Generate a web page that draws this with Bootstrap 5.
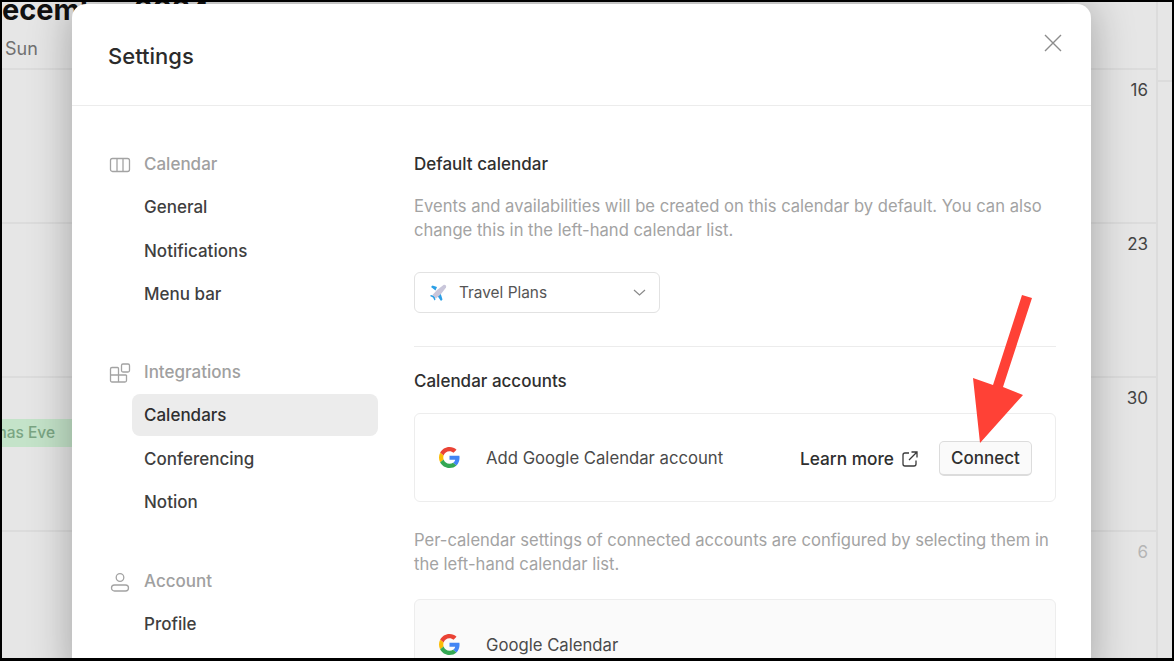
<!DOCTYPE html>
<html lang="en">
  <head>
    <title>Settings</title>
    <meta charset="utf-8" />
    <meta name="viewport" content="width=device-width, initial-scale=1" />
    <link
      href="https://cdn.jsdelivr.net/npm/bootstrap@5.3.3/dist/css/bootstrap.min.css"
      rel="stylesheet"
    />
    <style>
      html, body { height: 100%; }
      body { background: #000; font-family: "Inter", "Liberation Sans", sans-serif; overflow: hidden; padding: 2px 2px 3px 2px; color: #2b2b2b; }
      .shot { position: relative; height: 100%; overflow: hidden; background: #e6e6e6; }

      /* calendar behind the dialog */
      .cal-top { display: flow-root; height: 68px; border-bottom: 2px solid #dcdcdc; border-right: 2px solid #dcdcdc; margin-right: 14px; }
      .cal-title { font-size: 29px; font-weight: 700; line-height: 36px; color: #111; margin: -10px 0 0 -21px; white-space: nowrap; }
      .cal-dow { font-size: 18px; color: #707070; line-height: 24px; margin: 9px 0 0 3px; }
      .cal-row { height: 154px; border-bottom: 2px solid #dcdcdc; margin-right: 14px; border-right: 2px solid #dcdcdc; display: flow-root; }
      .cal-num { width: 24px; margin: 8px 8px 0 auto; font-size: 17px; line-height: 24px; text-align: right; color: #444; }
      .cal-num-off { color: #b5b5b5; }
      .cal-event { width: 70px; height: 28px; margin-top: 9px; padding-right: 17px; background: #c4e3c9; color: #7aa583; font-size: 15.5px; font-weight: 500; line-height: 28px; white-space: nowrap; display: flex; justify-content: flex-end; }
      .cal-strip { position: absolute; top: 78px; right: 0; width: 14px; border-top: 2px solid #dcdcdc; }

      /* settings dialog */
      .set-dialog { position: absolute; left: 70px; top: 2px; width: 1019px; height: 680px; background: #fff; border: 0; border-radius: 14px; box-shadow: 0 0 44px rgba(0, 0, 0, .3); overflow: hidden; }
      .set-head { flex: none; height: 102px; padding: 0 29px 0 36px; border-bottom: 1px solid #ececec; }
      .set-title { font-size: 22px; font-weight: 500; color: #2b2b2b; margin: 4px 0 0; }
      .set-close { background: none; border: 0; padding: 0; margin-bottom: 24px; width: 18px; height: 18px; line-height: 0; }
      .set-side { width: 342px; padding: 37px 0 0 36px; flex: none; }
      .set-group { display: flex; align-items: center; height: 43px; font-size: 17px; font-weight: 500; color: #a0a0a0; }
      .set-group svg { width: 22px; height: 22px; margin: 0 13px 0 1px; flex: none; }
      .set-item { display: block; width: 246px; height: 42px; margin: 0 0 1.5px 24px; padding: 0 12px; font-size: 17px; font-weight: 500; line-height: 42px; color: #3f3f3f; text-decoration: none; border-radius: 8px; }
      .set-item.is-on { background: #ececec; color: #2f2f2f; }
      .set-gap { height: 34.5px; }
      .set-gap-wide { height: 35.5px; }
      .set-main { width: 642px; flex: none; padding-top: 46px; }
      .set-h { font-size: 17px; font-weight: 500; line-height: 24px; color: #2f2f2f; margin: 0; }
      .set-note { font-size: 16.6px; line-height: 24px; color: #a3a3a3; margin: 18px 0 0; }
      .set-note-after { margin-top: 26px; }
      .set-select { width: 246px; height: 41px; margin-top: 30px; padding: 0 13px 0 15px; border: 1px solid #e2e2e2; border-radius: 6px; font-size: 15.4px; color: #555; background: #fff; }
      .set-plane { margin-right: 12px; flex: none; }
      .set-rule { height: 1px; margin: 33px 0 22px; background: #ececec; }
      .acct-box { height: 89px; margin-top: 20px; padding: 2px 23px 0 24px; border: 1px solid #ededed; border-radius: 6px; }
      .acct-box.is-soft { background: #fafafa; height: 120px; margin-top: 23px; padding-top: 34px; align-items: flex-start !important; }
      .acct-logo { margin-bottom: 2px; flex: none; }
      .acct-name { font-size: 16.7px; line-height: 21px; color: #4a4a4a; margin-left: 26px; }
      .is-soft .acct-name { margin-top: 1px; }
      .acct-link { font-size: 17.3px; font-weight: 500; color: #2f2f2f; }
      .acct-btn { height: 35px; width: 93px; margin-left: 21px; padding: 0; font-size: 17px; font-weight: 500; color: #2f2f2f; background: #fafafa; border: 1px solid #dcdcdc; border-bottom-width: 2px; border-radius: 5px; line-height: 1; }
      .red-arrow { position: absolute; left: 0; top: 0; pointer-events: none; }
    </style>
  </head>
  <body>
    <div class="shot">
      <div class="cal-back">
        <div class="cal-top">
          <div class="cal-title">December 2024</div>
          <div class="cal-dow">Sun</div>
        </div>
        <div class="cal-row"><div class="cal-num">16</div></div>
        <div class="cal-row"><div class="cal-num">23</div></div>
        <div class="cal-row">
          <div class="cal-num">30</div>
          <div class="cal-event">Christmas Eve</div>
        </div>
        <div class="cal-row"><div class="cal-num cal-num-off">6</div></div>
      </div>
      <div class="cal-strip"></div>

      <div class="modal-content set-dialog">
        <div class="set-head d-flex align-items-center justify-content-between">
          <h5 class="set-title">Settings</h5>
          <button type="button" class="set-close" aria-label="Close">
            <svg width="18" height="18" viewBox="0 0 18 18" fill="none" stroke="#8c8c8c" stroke-width="1.4"><path d="M1 1l16 16M17 1L1 17" /></svg>
          </button>
        </div>
        <div class="d-flex">
          <div class="set-side">
            <div class="set-group">
              <svg viewBox="0 0 22 22" fill="none" stroke="#a3a3a3" stroke-width="1.3"><rect x="1.500" y="4.500" width="19" height="13" rx="2" /><path d="M8 4.500v13M14 4.500v13" /></svg>
              Calendar
            </div>
            <a class="set-item" href="#">General</a>
            <a class="set-item" href="#">Notifications</a>
            <a class="set-item" href="#">Menu bar</a>
            <div class="set-gap"></div>
            <div class="set-group">
              <svg viewBox="0 0 22 22" fill="none" stroke="#a3a3a3" stroke-width="1.3"><path d="M3 5.500h5.500a1 1 0 0 1 1 1V20H3a1.500 1.500 0 0 1-1.500-1.500V7A1.500 1.500 0 0 1 3 5.500zM1.500 13h16M9.500 13v7h6.500a1.500 1.500 0 0 0 1.500-1.500V13" /><rect x="12.500" y="2" width="8" height="8" rx="1.500" /></svg>
              Integrations
            </div>
            <a class="set-item is-on" href="#">Calendars</a>
            <a class="set-item" href="#">Conferencing</a>
            <a class="set-item" href="#">Notion</a>
            <div class="set-gap-wide"></div>
            <div class="set-group">
              <svg viewBox="0 0 22 22" fill="none" stroke="#a3a3a3" stroke-width="1.3"><circle cx="11" cy="6.500" r="3.800" /><rect x="2.500" y="14" width="17" height="6" rx="3" /></svg>
              Account
            </div>
            <a class="set-item" href="#">Profile</a>
          </div>
          <div class="set-main">
            <h6 class="set-h">Default calendar</h6>
            <p class="set-note">Events and availabilities will be created on this calendar by default. You can also change this in the left-hand calendar list.</p>
            <div class="set-select d-flex align-items-center">
              <svg class="set-plane" width="17" height="17" viewBox="0 0 17 17"><path fill="#2b9fe6" d="M7 3 2.500 1.500 1 3l4.500 3.500zM10.500 9l2 6.500L11 17l-3.500-5zM1 11l-1 1 3 1.500L4.500 16.500l1-1-1-3.500z" /><path fill="#c9c6da" d="M13.500 1c1.500-.8 3.300.8 2.500 2.500L11 10l-5 4.500-3.500-3.500L7 6z" /></svg>
              <span>Travel Plans</span>
              <svg class="ms-auto" width="13" height="7" viewBox="0 0 13 7" fill="none" stroke="#8a8a8a" stroke-width="1.200"><path d="M1 1l5.500 5 5.500-5" /></svg>
            </div>
            <div class="set-rule"></div>
            <h6 class="set-h">Calendar accounts</h6>
            <div class="acct-box d-flex align-items-center">
              <svg class="acct-logo" width="21" height="21" viewBox="0 0 48 48"><path fill="#EA4335" d="M24 9.500c3.540 0 6.710 1.220 9.210 3.600l6.850-6.850C35.900 2.380 30.470 0 24 0 14.620 0 6.510 5.380 2.560 13.220l7.980 6.190C12.430 13.720 17.740 9.500 24 9.500z" /><path fill="#4285F4" d="M46.980 24.550c0-1.570-.15-3.090-.38-4.550H24v9.020h12.940c-.58 2.960-2.260 5.480-4.780 7.180l7.730 6c4.510-4.180 7.090-10.360 7.090-17.650z" /><path fill="#FBBC05" d="M10.530 28.590c-.48-1.450-.76-2.990-.76-4.590s.27-3.140.76-4.590l-7.980-6.190C.92 16.460 0 20.120 0 24c0 3.880.92 7.540 2.560 10.780l7.970-6.190z" /><path fill="#34A853" d="M24 48c6.480 0 11.930-2.130 15.890-5.810l-7.730-6c-2.150 1.450-4.920 2.300-8.160 2.300-6.260 0-11.570-4.220-13.470-9.910l-7.980 6.190C6.510 42.620 14.620 48 24 48z" /></svg>
              <span class="acct-name">Add Google Calendar account</span>
              <span class="acct-link ms-auto">Learn more</span>
              <svg class="ms-2" width="16" height="16" viewBox="0 0 16 16" fill="none" stroke="#3a3a3a" stroke-width="1.300"><path d="M7 2H3a2 2 0 0 0-2 2v9a2 2 0 0 0 2 2h9a2 2 0 0 0 2-2V9.500M9.500 1H15v5.500M15 1 7 9" /></svg>
              <button type="button" class="btn acct-btn">Connect</button>
            </div>
            <p class="set-note set-note-after">Per-calendar settings of connected accounts are configured by selecting them in the left-hand calendar list.</p>
            <div class="acct-box is-soft d-flex">
              <svg class="acct-logo" width="21" height="21" viewBox="0 0 48 48"><path fill="#EA4335" d="M24 9.500c3.540 0 6.710 1.220 9.210 3.600l6.850-6.850C35.900 2.380 30.470 0 24 0 14.620 0 6.510 5.380 2.560 13.220l7.980 6.190C12.430 13.720 17.740 9.500 24 9.500z" /><path fill="#4285F4" d="M46.980 24.550c0-1.570-.15-3.090-.38-4.550H24v9.020h12.940c-.58 2.960-2.260 5.480-4.780 7.180l7.730 6c4.510-4.180 7.090-10.360 7.090-17.650z" /><path fill="#FBBC05" d="M10.530 28.590c-.48-1.450-.76-2.990-.76-4.590s.27-3.140.76-4.590l-7.980-6.190C.92 16.460 0 20.120 0 24c0 3.880.92 7.540 2.560 10.780l7.970-6.190z" /><path fill="#34A853" d="M24 48c6.480 0 11.930-2.130 15.890-5.810l-7.730-6c-2.150 1.450-4.920 2.300-8.160 2.300-6.260 0-11.570-4.220-13.470-9.910l-7.980 6.190C6.510 42.620 14.620 48 24 48z" /></svg>
              <span class="acct-name">Google Calendar</span>
            </div>
          </div>
        </div>
      </div>

      <svg class="red-arrow" width="1170" height="656" viewBox="0 0 1170 656">
        <path fill="#ff4136" d="M1020 293 1030 296 1001 385 1021 393 978 441 971 376 991 383z" />
      </svg>
    </div>
    <script src="https://cdn.jsdelivr.net/npm/bootstrap@5.3.3/dist/js/bootstrap.bundle.min.js"></script>
  </body>
</html>
